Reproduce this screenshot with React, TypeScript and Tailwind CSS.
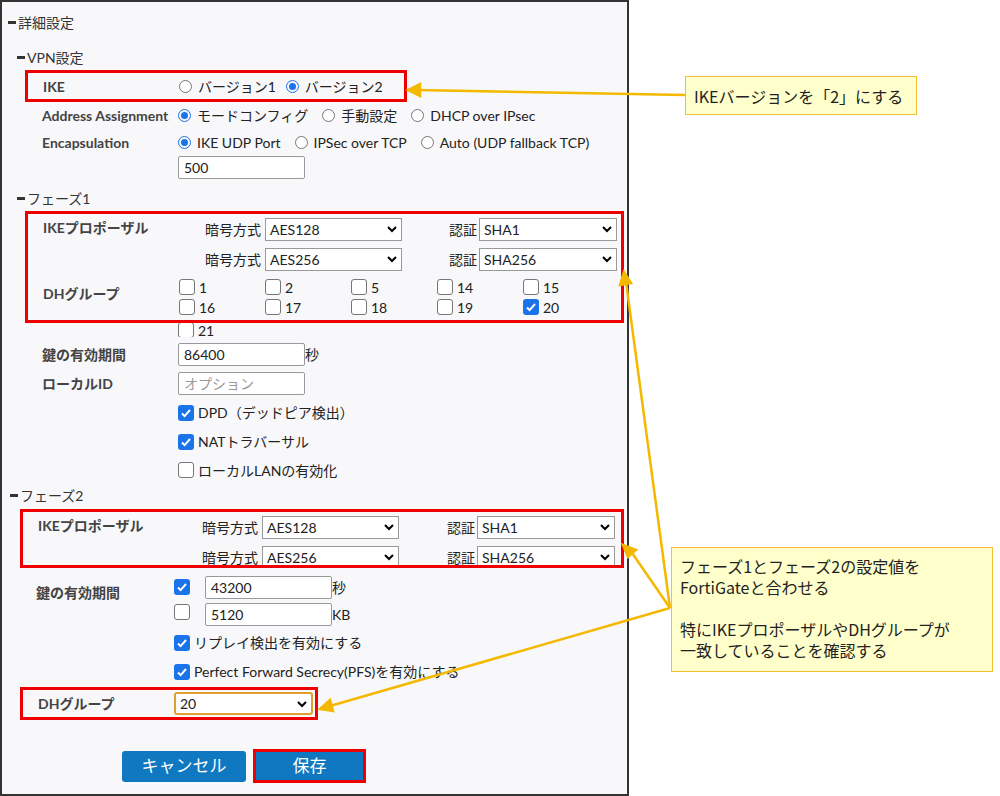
import React from "react";

const F = { fontFamily: '"Lato","Noto Sans CJK JP",sans-serif' };

function Radio({ on }: { on?: boolean }) {
  return (
    <span className={`inline-flex w-[13px] h-[13px] rounded-full border items-center justify-center mr-[6px] ${on ? "border-[#1a73e8]" : "border-[#767676] bg-white"}`}>
      {on && <span className="w-[7px] h-[7px] rounded-full bg-[#1a73e8]" />}
    </span>
  );
}
function Check({ on }: { on?: boolean }) {
  return on ? (
    <span className="inline-flex w-[16px] h-[16px] rounded-[3px] bg-[#1a73e8] items-center justify-center mr-[4px]">
      <svg width="12" height="12" viewBox="0 0 12 12"><path d="M2 6.5l2.6 2.6L10 3" stroke="#fff" strokeWidth="2" fill="none" /></svg>
    </span>
  ) : (
    <span className="inline-block w-[16px] h-[16px] rounded-[3px] border border-[#767676] bg-white mr-[4px]" />
  );
}
function Sel({ v, w, orange }: { v: string; w: number; orange?: boolean }) {
  return (
    <span style={{ width: w }} className={`inline-flex h-[23px] items-center justify-between px-[4px] bg-white border ${orange ? "border-[#e0a030] border-2 rounded-[3px]" : "border-[#999]"} text-[14px]`}>
      {v}
      <svg width="10" height="8" viewBox="0 0 10 8"><path d="M1 2l4 4 4-4" stroke="#000" strokeWidth="2" fill="none" /></svg>
    </span>
  );
}
function Inp({ v, ph, w = 127 }: { v?: string; ph?: string; w?: number }) {
  return (
    <span style={{ width: w }} className={`inline-flex h-[23px] items-center px-[5px] bg-white border border-[#999] rounded-[2px] text-[14px] ${ph ? "text-[#999]" : ""}`}>
      {v ?? ph}
    </span>
  );
}
const H = ({ t, x }: { t: string; x: number }) => (
  <div style={{ paddingLeft: x }} className="flex items-center h-[22px] text-[14px] text-[#333]">
    <span className="w-[8px] h-[3px] bg-[#333] mr-[2px]" />{t}
  </div>
);

function Proposal({ lx, cx, sx, ax, bx, sw }: { lx: number; cx: number; sx: number; ax: number; bx: number; sw: number }) {
  const row = (c: string, a: string, first: boolean) => (
    <div className="flex items-center h-[30px] text-[14px]">
      <span style={{ width: cx - lx }} className="font-bold text-[#444] self-start pt-[3px]">{first ? "IKEプロポーザル" : ""}</span>
      <span style={{ width: sx - cx }}>暗号方式</span>
      <Sel v={c} w={ax - sx} />
      <span style={{ width: bx - 30 - ax }} />
      <span className="w-[30px]">認証</span>
      <Sel v={a} w={sw} />
    </div>
  );
  return <>{row("AES128", "SHA1", true)}{row("AES256", "SHA256", false)}</>;
}

export default function App() {
  return (
    <div style={F} className="relative w-[1000px] h-[796px] bg-white text-[#222] overflow-hidden">
      <div className="w-[629px] h-[796px] border-2 border-[#333] bg-[#f8f8fa] pt-[9px] text-[14px]">
        <H t="詳細設定" x={6} />
        <div className="h-[13px]" />
        <H t="VPN設定" x={15} />
        <div className="ml-[23px] mt-[2px] w-[382px] h-[32px] border-[3px] border-[#e00] flex items-center pl-[15px]">
          <span className="w-[136px] font-bold text-[#444]">IKE</span>
          <Radio /><span className="mr-[10px]">バージョン1</span>
          <Radio on /><span>バージョン2</span>
        </div>
        <div className="flex items-center h-[27px] pl-[40px]">
          <span className="w-[136px] font-bold text-[#444]">Address Assignment</span>
          <Radio on /><span className="mr-[14px]">モードコンフィグ</span>
          <Radio /><span className="mr-[14px]">手動設定</span>
          <Radio /><span>DHCP over IPsec</span>
        </div>
        <div className="flex items-center h-[27px] pl-[40px]">
          <span className="w-[136px] font-bold text-[#444]">Encapsulation</span>
          <Radio on /><span className="mr-[14px]">IKE UDP Port</span>
          <Radio /><span className="mr-[14px]">IPSec over TCP</span>
          <Radio /><span>Auto (UDP fallback TCP)</span>
        </div>
        <div className="pl-[176px] h-[26px]"><Inp v="500" /></div>
        <div className="h-[5px]" />
        <H t="フェーズ1" x={15} />
        <div className="ml-[23px] mt-[2px] w-[599px] h-[112px] border-[3px] border-[#e00] pl-[15px] pt-[0px]">
          <Proposal lx={42} cx={204} sx={264} ax={401} bx={478} sw={138} />
          <div className="flex pt-[5px]">
            <span className="w-[136px] font-bold text-[#444] pt-[4px]">DHグループ</span>
            <div className="grid grid-cols-5 w-[430px] gap-y-[4px]">
              {["1", "2", "5", "14", "15", "16", "17", "18", "19", "20"].map((n) => (
                <span key={n} className="flex items-center h-[16px]"><Check on={n === "20"} />{n}</span>
              ))}
            </div>
          </div>
        </div>
        <div className="pl-[176px] flex items-center h-[14px] overflow-hidden"><Check />21</div>
        <div className="flex items-center h-[30px] pl-[40px] mt-[2px]">
          <span className="w-[136px] font-bold text-[#444]">鍵の有効期間</span><Inp v="86400" /><span>秒</span>
        </div>
        <div className="flex items-center h-[29px] pl-[40px]">
          <span className="w-[136px] font-bold text-[#444]">ローカルID</span><Inp ph="オプション" />
        </div>
        <div className="pl-[176px] flex items-center h-[29px]"><Check on />DPD（デッドピア検出）</div>
        <div className="pl-[176px] flex items-center h-[29px]"><Check on />NATトラバーサル</div>
        <div className="pl-[176px] flex items-center h-[28px]"><Check />ローカルLANの有効化</div>
        <H t="フェーズ2" x={8} />
        <div className="ml-[18px] mt-[3px] w-[604px] h-[59px] border-[3px] border-[#e00] pl-[15px] overflow-hidden">
          <Proposal lx={36} cx={200} sx={260} ax={397} bx={475} sw={138} />
        </div>
        <div className="flex pl-[34px] pt-[8px]">
          <span className="w-[138px] font-bold text-[#444] pt-[6px]">鍵の有効期間</span>
          <div className="flex flex-col gap-[4px]">
            <div className="flex items-center"><span className="w-[31px]"><Check on /></span><Inp v="43200" />秒</div>
            <div className="flex items-center"><span className="w-[31px]"><Check /></span><Inp v="5120" />KB</div>
          </div>
        </div>
        <div className="pl-[172px] flex items-center h-[29px] mt-[2px]"><Check on />リプレイ検出を有効にする</div>
        <div className="pl-[172px] flex items-center h-[29px]"><Check on />Perfect Forward Secrecy(PFS)を有効にする</div>
        <div className="ml-[18px] mt-[1px] w-[298px] h-[33px] border-[3px] border-[#e00] flex items-center pl-[15px]">
          <span className="w-[136px] font-bold text-[#444]">DHグループ</span><Sel v="20" w={139} orange />
        </div>
        <div className="flex pl-[120px] mt-[29px] gap-[7px] items-center">
          <span className="w-[124px] h-[31px] bg-[#0f78c0] rounded-[3px] text-white text-[17px] flex items-center justify-center">キャンセル</span>
          <span className="w-[113px] h-[34px] border-[3px] border-[#e00] flex"><span className="flex-1 bg-[#0f78c0] text-white text-[17px] flex items-center justify-center">保存</span></span>
        </div>
      </div>

      <div style={{ fontFamily: '"Noto Sans CJK JP",sans-serif' }} className="absolute left-[685px] top-[76px] w-[232px] h-[39px] bg-[#ffffcc] border border-[#f5c030] flex items-center pl-[8px] text-[16px] text-[#222]">
        IKEバージョンを「2」にする
      </div>
      <div style={{ fontFamily: '"Noto Sans CJK JP",sans-serif' }} className="absolute left-[671px] top-[547px] w-[322px] h-[125px] bg-[#ffffcc] border border-[#f5c030] pl-[8px] pt-[8px] text-[16px] leading-[21px] text-[#222]">
        フェーズ1とフェーズ2の設定値を<br />FortiGateと合わせる<br /><br />特にIKEプロポーザルやDHグループが<br />一致していることを確認する
      </div>
      <svg className="absolute left-0 top-0" width="1000" height="796">
        <g stroke="#f5b800" strokeWidth="2.5" fill="#f5b800">
          <line x1="685" y1="95" x2="416" y2="90" />
          <path d="M408 90 l12 -6 l0 12z" />
          <line x1="670" y1="608" x2="626" y2="282" />
          <path d="M624 272 l-4 13 l11 -2z" />
          <line x1="670" y1="608" x2="630" y2="550" />
          <path d="M623 545 l5 12 l8 -7z" />
          <line x1="670" y1="608" x2="330" y2="706" />
          <path d="M320 709 l13 2 l-3 -11z" />
        </g>
      </svg>
    </div>
  );
}
